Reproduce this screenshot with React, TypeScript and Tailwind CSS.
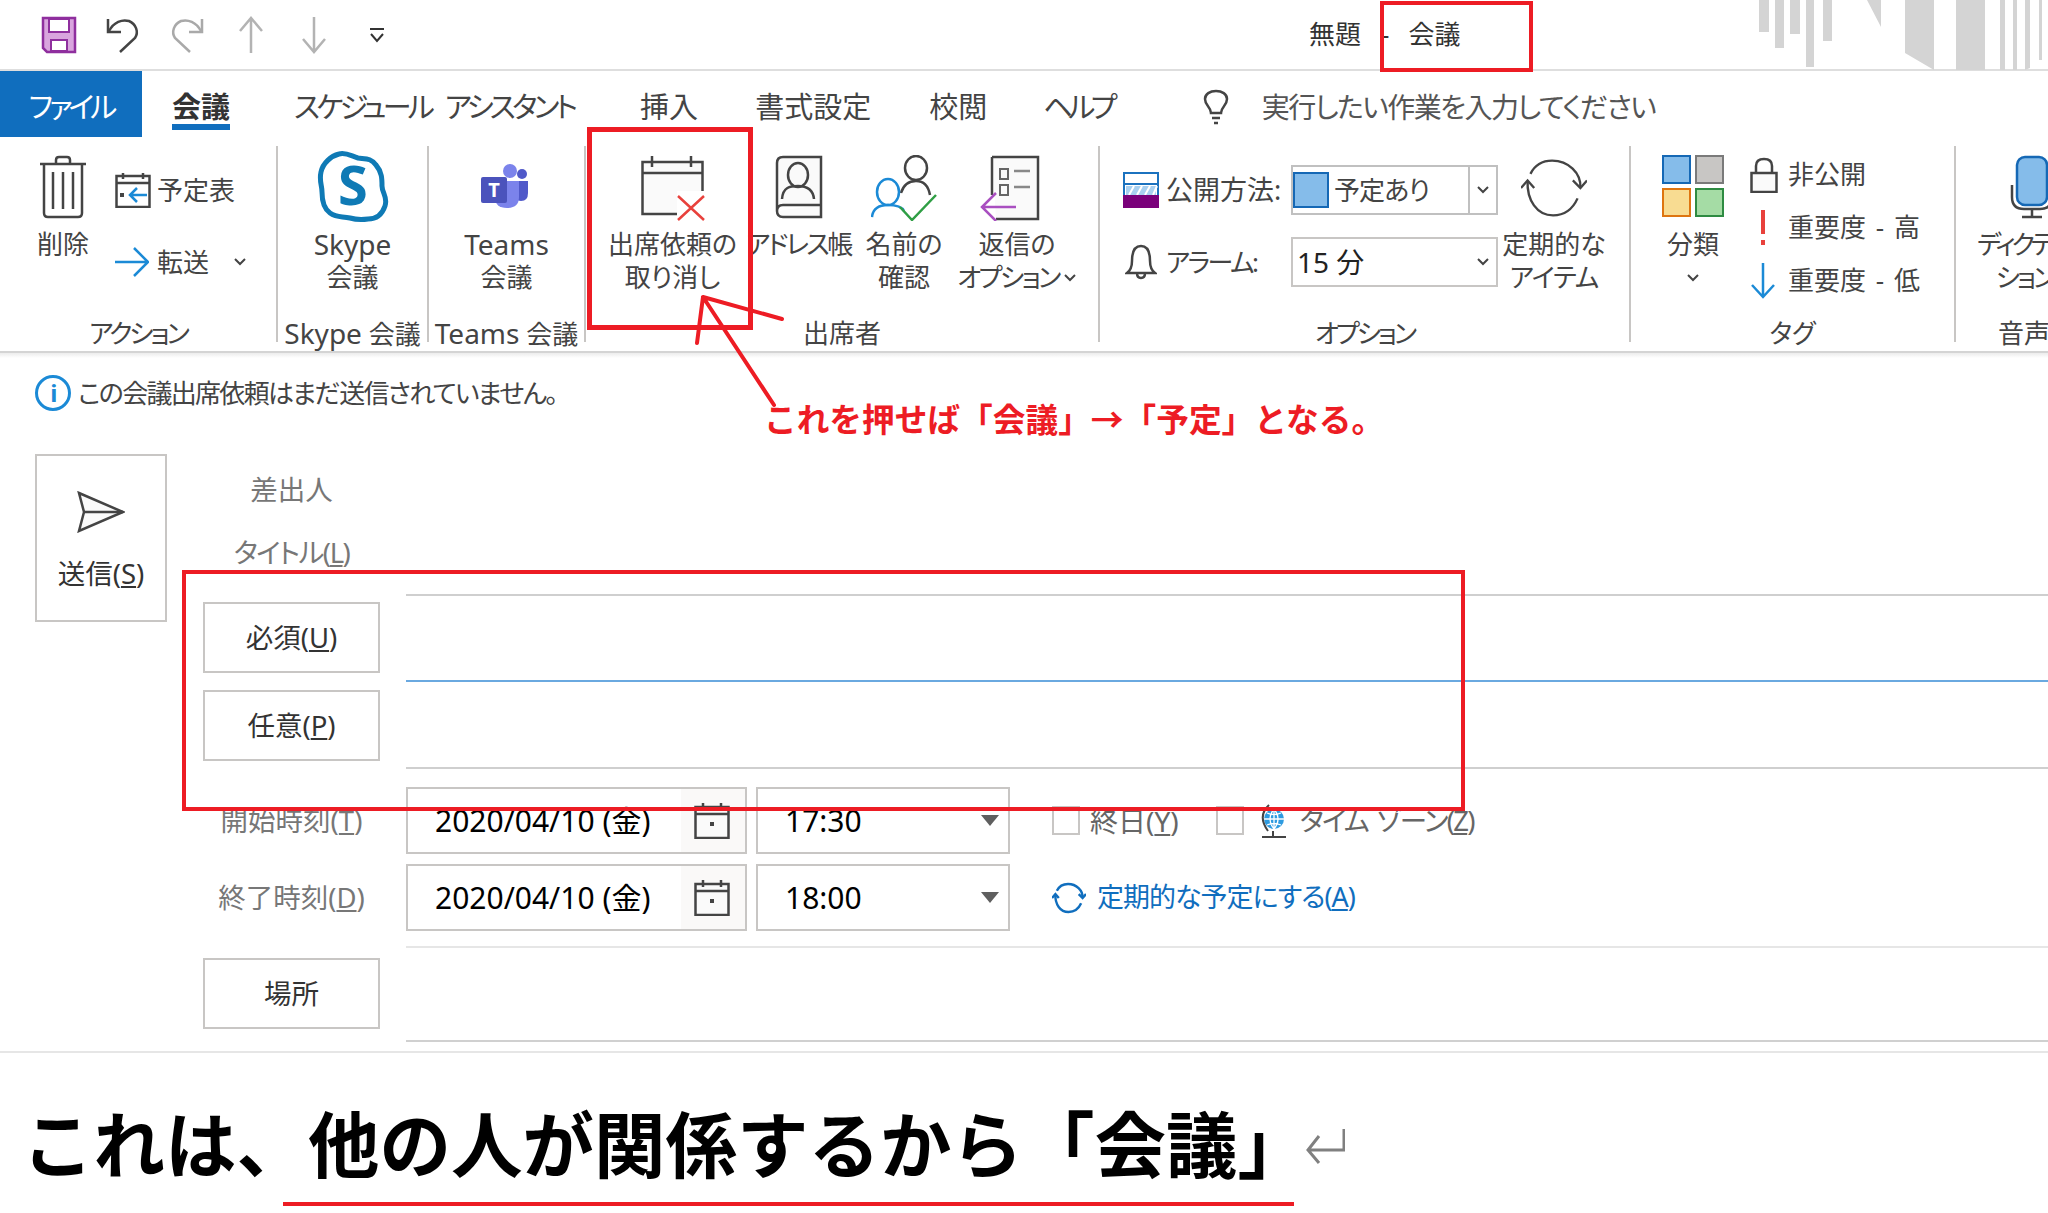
import type { ReactNode } from 'react';
import clsx from 'clsx';

const Chevron = ({ className }: { className?: string }) => (
  <svg width="14" height="10" viewBox="0 0 14 10" className={className} fill="none" stroke="#444" strokeWidth="2">
    <path d="M2 2l5 5 5-5" />
  </svg>
);

const SaveIcon = () => (
  <svg width="36" height="38" viewBox="0 0 36 38">
    <path d="M2 2h32v34H6l-4-4z" fill="#d9a5de" stroke="#8f2f9e" strokeWidth="2.5" />
    <rect x="8" y="3" width="20" height="13" fill="#fff" stroke="#8f2f9e" strokeWidth="2" />
    <rect x="10" y="24" width="16" height="11" fill="#fff" stroke="#8f2f9e" strokeWidth="2" />
  </svg>
);

const UndoIcon = ({ flip, color }: { flip?: boolean; color: string }) => (
  <svg width="34" height="38" viewBox="0 0 34 38" fill="none" stroke={color} strokeWidth="2.5" className={flip ? '-scale-x-100' : ''}>
    <path d="M2 3v13h13" />
    <path d="M3 15C8 6 16 3 23 5c7 3 10 11 6 17L14 36" />
  </svg>
);

const VerticalArrow = ({ down }: { down?: boolean }) => (
  <svg width="26" height="38" viewBox="0 0 26 38" fill="none" stroke="#b3b3b3" strokeWidth="2.5" className={down ? 'rotate-180' : ''}>
    <path d="M13 37V2M2 15L13 2l11 13" />
  </svg>
);

const TrashIcon = () => (
  <svg width="48" height="64" viewBox="0 0 48 64" fill="none" stroke="#444" strokeWidth="2.5">
    <path d="M1 9h46M17 8V5q0-3 3-3h8q3 0 3 3v3" />
    <path d="M5 9v49q0 4 4 4h30q4 0 4-4V9" />
    <path d="M14 17v37M24 17v37M34 17v37" />
  </svg>
);

const CalendarArrowIcon = () => (
  <svg width="36" height="36" viewBox="0 0 36 36" fill="none">
    <path d="M1.500 4h33v31h-33zM1.500 11h33M8 1v6M28 1v6" stroke="#444" strokeWidth="2.500" />
    <path d="M32 23H15M22 16l-7 7 7 7" stroke="#1b8ad6" strokeWidth="2.500" />
    <rect x="5" y="21" width="4" height="4" fill="#444" />
  </svg>
);

const SkypeIcon = () => (
  <svg width="72" height="72" viewBox="0 0 72 72">
    <path
      d="M22 3c7-2 12 2 19 4 8 1 13 0 18 7 6 7 6 14 6 21 0 7 6 11 3 20-3 9-9 13-17 13-7 1-11 1-18-1-8-2-13 0-20-5C6 57 5 49 5 41c0-7-3-11-1-20C6 12 14 5 22 3z"
      fill="#fff"
      stroke="#0f7ab5"
      strokeWidth="5"
    />
    <text x="36" y="54" textAnchor="middle" fontSize="54" fontWeight="700" fill="#0f7ab5" fontFamily="Noto Sans">
      S
    </text>
  </svg>
);

const TeamsIcon = () => (
  <svg width="50" height="46" viewBox="0 0 50 46">
    <circle cx="29" cy="8" r="7" fill="#7b83eb" />
    <circle cx="41" cy="11" r="5" fill="#5059c9" />
    <path d="M33 18h14v12q0 8-7 8-7 0-7-8z" fill="#5059c9" />
    <path d="M14 18h24v16q0 11-12 11-12 0-12-11z" fill="#7b83eb" />
    <rect x="0" y="14" width="26" height="26" rx="2" fill="#4b53bc" />
    <text x="13" y="34" textAnchor="middle" fontSize="20" fontWeight="700" fill="#fff" fontFamily="Noto Sans">
      T
    </text>
  </svg>
);

const CancelIcon = () => (
  <svg width="64" height="66" viewBox="0 0 64 66" fill="none">
    <path d="M1.500 7h60v52h-60zM1.500 18h60" fill="#fafafa" stroke="#444" strokeWidth="2.500" />
    <path d="M11 1v11M50 1v11" stroke="#444" strokeWidth="2.500" />
    <rect x="36" y="36" width="30" height="30" fill="#fff" />
    <path d="M37 41l26 24M63 41L37 65" stroke="#e8413c" strokeWidth="2.500" />
  </svg>
);

const AddressBookIcon = () => (
  <svg width="48" height="64" viewBox="0 0 48 64" fill="none" stroke="#444" strokeWidth="2.500">
    <path d="M46 2H8Q2 2 2 8v48q0 6 6 6h38zM2 56q0-6 6-6h38" fill="#fafafa" />
    <ellipse cx="23" cy="20" rx="10" ry="12" />
    <path d="M7 44c1-12 8-13 16-13s15 3 16 13" />
  </svg>
);

const CheckNamesIcon = () => (
  <svg width="66" height="66" viewBox="0 0 66 66" fill="none" strokeWidth="2.500">
    <ellipse cx="45" cy="13" rx="11" ry="12" stroke="#444" />
    <path d="M30 38c3-10 9-12 15-12s12 3 14 14" stroke="#444" />
    <ellipse cx="17" cy="37" rx="11" ry="13" stroke="#1b8ad6" />
    <path d="M1 62c1-9 7-12 16-12s14 2 16 6" stroke="#1b8ad6" />
    <path d="M29 52l12 13 24-25" stroke="#2f9e44" />
  </svg>
);

const ReplyOptionsIcon = () => (
  <svg width="60" height="66" viewBox="0 0 60 66" fill="none">
    <path d="M12 2h46v62H16" stroke="#444" strokeWidth="2.500" fill="#fafafa" />
    <path d="M12 2v38" stroke="#444" strokeWidth="2.500" />
    <path d="M20 14h8v10h-8zM20 30h8v10h-8z" stroke="#666" strokeWidth="2" />
    <path d="M34 16h16M34 32h16" stroke="#888" strokeWidth="2.500" />
    <path d="M36 52H3M16 38L2 52l14 14" stroke="#a94fc0" strokeWidth="2.500" />
  </svg>
);

const PublishSwatch = () => (
  <svg width="36" height="36" viewBox="0 0 36 36">
    <rect x="1" y="1" width="34" height="34" fill="#fff" stroke="#1b72bf" strokeWidth="2" />
    <path d="M1 12h34" stroke="#1b72bf" strokeWidth="2" />
    <rect x="3" y="14" width="30" height="9" fill="#a8d0f0" />
    <path d="M6 23l5-9M14 23l5-9M22 23l5-9M30 23l4-9" stroke="#fff" strokeWidth="2" />
    <rect x="0" y="23" width="36" height="13" fill="#7a007a" />
  </svg>
);

const BellIcon = () => (
  <svg width="32" height="36" viewBox="0 0 32 36" fill="none" stroke="#444" strokeWidth="2.500">
    <path d="M2 29h28c-4-3-5-6-5-12 0-7-1-15-9-15S7 10 7 17c0 6-1 9-5 12zM12 29q0 5 4 5t4-5" />
  </svg>
);

const RecurIcon = ({ size, color }: { size: number; color: string }) => (
  <svg width={size} height={size} viewBox="0 0 70 62" fill="none" stroke={color} strokeWidth={size > 50 ? 2.5 : 5}>
    <path d="M10 16C15 6 24 2 33 2c17 0 31 13 30 29" />
    <path d="M7 23C6 44 17 60 34 60c12 0 21-7 26-18" />
    <path d="M0 31l7-8 7 8M55 23l8 8 7-8" />
  </svg>
);

const CategoryIcon = () => (
  <svg width="62" height="62" viewBox="0 0 62 62">
    <rect x="1" y="1" width="27" height="27" fill="#85bcea" stroke="#1568b5" strokeWidth="2" />
    <rect x="34" y="1" width="27" height="27" fill="#c8c6c4" stroke="#7a7a7a" strokeWidth="2" />
    <rect x="1" y="34" width="27" height="27" fill="#f8dc92" stroke="#de7510" strokeWidth="2" />
    <rect x="34" y="34" width="27" height="27" fill="#a5dca5" stroke="#2e8b42" strokeWidth="2" />
  </svg>
);

const LockIcon = () => (
  <svg width="28" height="36" viewBox="0 0 28 36" fill="none" stroke="#444" strokeWidth="2.500">
    <rect x="1.500" y="16" width="25" height="19" fill="#fafafa" />
    <path d="M6 16V9q0-7 8-7t8 7v7" />
  </svg>
);

const MicIcon = () => (
  <svg width="44" height="64" viewBox="0 0 44 64" fill="none">
    <rect x="7" y="2" width="30" height="48" rx="8" fill="#85bcea" stroke="#1568b5" strokeWidth="2.500" />
    <path d="M2 30v12q0 12 12 12h16q12 0 12-12V30M22 54v8M12 62h20" stroke="#444" strokeWidth="2.500" />
  </svg>
);

const SendIcon = () => (
  <svg width="48" height="42" viewBox="0 0 48 42" fill="#fafafa" stroke="#444" strokeWidth="2.500">
    <path d="M2 2l44 19L2 40l5-19z" />
    <path d="M7 21h39" />
  </svg>
);

const SmallCalendar = () => (
  <svg width="36" height="36" viewBox="0 0 36 36" fill="#fafafa" stroke="#444" strokeWidth="2.500">
    <path d="M1.500 4h33v31h-33zM1.500 11h33M9 0v7M27 0v7" />
    <rect x="16" y="19" width="4" height="4" fill="#444" stroke="none" />
  </svg>
);

const GlobeIcon = () => (
  <svg width="28" height="34" viewBox="0 0 28 34" fill="none">
    <circle cx="14" cy="15" r="10" fill="#2e9be0" />
    <path d="M4 15h20M14 5v20M7 9q7 3 14 0M7 21q7-3 14 0M14 5q-8 10 0 20M14 5q8 10 0 20" stroke="#fff" strokeWidth="1.300" />
    <path d="M9 1Q-3 12 8 27M2 33h24M13 27v6" stroke="#444" strokeWidth="2" />
  </svg>
);

const RibbonButton = ({ icon, lines, className }: { icon: ReactNode; lines: ReactNode[]; className?: string }) => (
  <div className={clsx('flex flex-col items-center text-[26px] leading-[33px] text-[#444] whitespace-nowrap', className)}>
    <div className="flex h-[82px] items-start justify-center pt-[9px]">{icon}</div>
    {lines.map((line, i) => (
      <div key={i} className="flex h-[33px] items-center">
        {line}
      </div>
    ))}
  </div>
);

const RibbonGroup = ({ label, labelClass, children, className }: { label: ReactNode; labelClass?: string; children: ReactNode; className?: string }) => (
  <section className={clsx('flex h-[196px] shrink-0 flex-col border-r-2 border-[#c8c6c4]', className)}>
    <div className="flex h-[172px] shrink-0">{children}</div>
    <div className={clsx('text-center text-[26px] leading-[30px] text-[#444] whitespace-nowrap', labelClass)}>{label}</div>
  </section>
);

const FieldButton = ({ children, className }: { children: ReactNode; className?: string }) => (
  <div className={clsx('flex h-[71px] w-[177px] items-center justify-center border-2 border-[#c8c6c4] text-[27.5px] text-[#333]', className)}>
    {children}
  </div>
);

const DateRow = ({ date, time, children }: { date: string; time: string; children?: ReactNode }) => (
  <div className="flex h-[67px] items-center text-[30px] text-black">
    <div className="flex h-full w-[341px] items-center border-2 border-[#c8c6c4] pl-[27px]">
      <span className="flex-1">{date}</span>
      <div className="flex h-full w-[64px] items-center justify-center bg-[#faf9f8] pr-[2px]">
        <SmallCalendar />
      </div>
    </div>
    <div className="ml-[9px] flex h-full w-[254px] items-center justify-between border-2 border-[#c8c6c4] pl-[27px] pr-[9px]">
      <span>{time}</span>
      <span className="h-0 w-0 border-x-[9px] border-t-[11px] border-x-transparent border-t-[#5f5f5f]" />
    </div>
    {children}
  </div>
);

const SideLabel = ({ children, className }: { children: ReactNode; className?: string }) => (
  <div className={clsx('w-[177px] shrink-0 text-center text-[27.5px] leading-[52px] text-[#777] whitespace-nowrap', className)}>{children}</div>
);

export default function App() {
  return (
    <div className="relative h-[1213px] w-full overflow-hidden bg-white font-['Noto_Sans','Noto_Sans_CJK_JP',sans-serif] [font-feature-settings:'palt']">
      <header className="relative flex h-[71px] items-center border-b-2 border-[#dedede] pl-[41px]">
        <div className="flex items-center">
          <SaveIcon />
          <div className="ml-[29px]">
            <UndoIcon color="#444" />
          </div>
          <div className="ml-[30px]">
            <UndoIcon flip color="#a9a9a9" />
          </div>
          <div className="ml-[34px]">
            <VerticalArrow />
          </div>
          <div className="ml-[37px]">
            <VerticalArrow down />
          </div>
          <svg width="16" height="16" viewBox="0 0 16 16" fill="none" stroke="#333" strokeWidth="2" className="ml-[42px]">
            <path d="M1 2h14M2 7l6 7 6-7" />
          </svg>
        </div>
        <div className="ml-[924px] flex w-[260px] text-[26px] text-[#333]">
          <span>無題</span>
          <span className="ml-[20px] mr-[19px]">-</span>
          <span>会議</span>
        </div>
        <svg width="300" height="70" viewBox="1748 0 300 70" fill="#d4d4d4" className="absolute right-0 top-0">
          <path d="M1759 0h10v32h-10zM1775 0h9v48h-9zM1790 0h10v34h-10zM1806 0h8v67h-8zM1823 0h9v41h-9zM1867 0h14v27zM1905 0h29v70l-29-17zM1956 0h29v70h-29zM2000 0h5v70h-5zM2013 0h4v70h-4zM2025 0h5v68l-5 2zM2039 0h3v60h-3z" />
        </svg>
      </header>

      <nav className="flex h-[66px] text-[29px] text-[#444]">
        <div className="flex w-[142px] items-center justify-center bg-[#106ebe] pt-[5px] tracking-[-4px] text-white">ファイル</div>
        <div className="flex items-center pt-[5px]">
          <div className="relative ml-[30px] font-bold text-[#333]">
            会議
            <span className="absolute left-0 top-[39px] h-[6px] w-full bg-[#106ebe]" />
          </div>
          <div className="ml-[64px] tracking-[-3.8px] [word-spacing:10px]">スケジュール アシスタント</div>
          <div className="ml-[66px]">挿入</div>
          <div className="ml-[57px]">書式設定</div>
          <div className="ml-[58px]">校閲</div>
          <div className="ml-[56px] tracking-[-4.5px]">ヘルプ</div>
          <svg width="26" height="36" viewBox="0 0 26 36" fill="none" stroke="#444" strokeWidth="2.500" className="ml-[90px]">
            <path d="M8 24c0-6-6-7-6-14C2 5 7 2 13 2s11 3 11 8c0 7-6 8-6 14zM9 29h8M11 34h4" />
          </svg>
          <div className="ml-[33px] text-[28px] tracking-[-1.5px] text-[#555]">実行したい作業を入力してください</div>
        </div>
      </nav>

      <div className="flex h-[216px] border-b-2 border-[#d4d4d4] pt-[9px]">
        <RibbonGroup label="アクション" labelClass="tracking-[-3px]" className="w-[278px]">
          <RibbonButton className="ml-[11px] w-[104px]" icon={<TrashIcon />} lines={['削除']} />
          <div className="flex flex-col gap-[22px] pt-[19px] text-[26px] text-[#444]">
            <div className="flex h-[50px] items-center gap-[6px]">
              <CalendarArrowIcon />
              予定表
            </div>
            <div className="flex h-[50px] items-center gap-[8px]">
              <svg width="34" height="32" viewBox="0 0 34 32" fill="none" stroke="#1b8ad6" strokeWidth="2.500">
                <path d="M0 16h32M19 2l14 14-14 14" />
              </svg>
              転送
              <Chevron className="ml-[16px]" />
            </div>
          </div>
        </RibbonGroup>

        <RibbonGroup label={<><span className="text-[28px]">Skype</span> 会議</>} className="w-[151px] items-center">
          <RibbonButton
            className="w-full"
            icon={<div className="-mt-[4px]"><SkypeIcon /></div>}
            lines={[<span className="text-[28px]">Skype</span>, '会議']}
          />
        </RibbonGroup>

        <RibbonGroup label={<><span className="text-[28px]">Teams</span> 会議</>} className="w-[157px] items-center">
          <RibbonButton
            className="w-full"
            icon={<div className="pt-[8px]"><TeamsIcon /></div>}
            lines={[<span className="text-[28px]">Teams</span>, '会議']}
          />
        </RibbonGroup>

        <RibbonGroup label="出席者" className="w-[514px]">
          <RibbonButton className="w-[173px]" icon={<CancelIcon />} lines={['出席依頼の', '取り消し']} />
          <RibbonButton className="w-[79px]" icon={<AddressBookIcon />} lines={[<span className="tracking-[-2.5px]">アドレス帳</span>]} />
          <RibbonButton className="w-[132px]" icon={<CheckNamesIcon />} lines={['名前の', '確認']} />
          <RibbonButton
            className="w-[94px]"
            icon={<div className="pr-[14px]"><ReplyOptionsIcon /></div>}
            lines={['返信の', <><span className="tracking-[-2.5px]">オプション</span><Chevron className="ml-[4px]" /></>]}
          />
        </RibbonGroup>

        <RibbonGroup label="オプション" labelClass="tracking-[-3px]" className="w-[531px]">
          <div className="flex flex-col gap-[22px] pl-[23px] pt-[19px] text-[26px] text-[#444]">
            <div className="flex h-[50px] items-center">
              <div className="flex w-[168px] items-center gap-[7px] text-[27px]">
                <PublishSwatch />
                公開方法:
              </div>
              <div className="flex h-full w-[207px] items-center border-2 border-[#c0c0c0]">
                <span className="h-[36px] w-[36px] border-2 border-[#1568b5] bg-[#85bcea]" />
                <span className="ml-[5px] flex-1 tracking-[-1px]">予定あり</span>
                <span className="flex h-full w-[28px] items-center justify-center border-l-2 border-[#c0c0c0]">
                  <Chevron />
                </span>
              </div>
            </div>
            <div className="flex h-[50px] items-center">
              <div className="flex w-[168px] items-center gap-[9px] pl-[2px] tracking-[-2.5px]">
                <BellIcon />
                アラーム:
              </div>
              <div className="flex h-full w-[207px] items-center justify-between border-2 border-[#c8c6c4] pl-[4px] pr-[6px] text-[28px] text-[#222]">
                15 分
                <Chevron />
              </div>
            </div>
          </div>
          <RibbonButton
            className="w-[112px]"
            icon={<RecurIcon size={66} color="#444" />}
            lines={['定期的な', <span className="tracking-[-1px]">アイテム</span>]}
          />
        </RibbonGroup>

        <RibbonGroup label="タグ" className="w-[325px]">
          <RibbonButton className="ml-[5px] w-[114px]" icon={<CategoryIcon />} lines={['分類', <Chevron />]} />
          <div className="flex flex-col pt-[2px] text-[26px] text-[#444] whitespace-nowrap">
            <div className="flex h-[53px] items-center">
              <div className="w-[38px]">
                <LockIcon />
              </div>
              非公開
            </div>
            <div className="flex h-[53px] items-center [word-spacing:3px]">
              <div className="w-[38px] pl-[11px]">
                <span className="block h-[24px] w-[4px] bg-[#e8413c]" />
                <span className="mt-[6px] block h-[5px] w-[4px] bg-[#e8413c]" />
              </div>
              重要度 - 高
            </div>
            <div className="flex h-[53px] items-center [word-spacing:3px]">
              <div className="w-[38px]">
                <svg width="26" height="36" viewBox="0 0 26 36" fill="none" stroke="#1b8ad6" strokeWidth="2.500">
                  <path d="M13 0v34M2 22l11 12 11-12" />
                </svg>
              </div>
              重要度 - 低
            </div>
          </div>
        </RibbonGroup>

        <section className="flex h-[196px] w-[92px] shrink-0 flex-col">
          <div className="flex h-[172px] shrink-0 pl-[21px]">
            <RibbonButton
              icon={<div className="pl-[14px]"><MicIcon /></div>}
              lines={[<span className="tracking-[-4px]">ディクテー</span>, <span className="tracking-[-3px]">ション</span>]}
            />
          </div>
          <div className="pl-[42px] text-[26px] leading-[30px] text-[#444] whitespace-nowrap">音声</div>
        </section>
      </div>
      <div className="h-[5px] bg-gradient-to-b from-[#ececec] to-white" />

      <div className="flex h-[70px] items-center gap-[7px] pl-[35px] text-[26px] tracking-[-1.7px] text-[#444]">
        <span className="flex h-[36px] w-[36px] items-center justify-center rounded-full border-[3px] border-[#1b8ad6] text-[24px] font-bold text-[#1b8ad6]">
          i
        </span>
        この会議出席依頼はまだ送信されていません。
      </div>

      <div className="mt-[26px] flex">
        <div className="ml-[35px] flex h-[168px] w-[132px] shrink-0 flex-col items-center border-2 border-[#c8c6c4] pt-[35px] text-[27.5px] text-[#333]">
          <SendIcon />
          <span className="mt-[20px]">
            送信(<span className="underline">S</span>)
          </span>
        </div>

        <div className="ml-[36px] flex-1">
          <div className="flex gap-[26px] pt-[10px]">
            <SideLabel>差出人</SideLabel>
          </div>
          <div className="flex gap-[26px] pt-[11px]">
            <SideLabel className="tracking-[-1.5px]">
              タイトル(<span className="underline">L</span>)
            </SideLabel>
          </div>
          <div className="mt-[15px] flex h-[88px] gap-[26px]">
            <div className="pt-[8px]">
              <FieldButton>
                必須(<span className="underline">U</span>)
              </FieldButton>
            </div>
            <div className="flex-1 border-y-2 border-t-[#cfcfcf] border-b-[#6aa9e0]" />
          </div>
          <div className="flex h-[87px] gap-[26px]">
            <div className="pt-[8px]">
              <FieldButton>
                任意(<span className="underline">P</span>)
              </FieldButton>
            </div>
            <div className="flex-1 border-b-2 border-[#cfcfcf]" />
          </div>
          <div className="mt-[18px] flex items-center gap-[26px]">
            <SideLabel>
              開始時刻(<span className="underline">T</span>)
            </SideLabel>
            <DateRow date="2020/04/10 (金)" time="17:30">
              <span className="ml-[42px] h-[29px] w-[28px] border-2 border-[#c8c6c4]" />
              <span className="ml-[10px] text-[28px] text-[#666]">
                終日(<span className="underline">Y</span>)
              </span>
              <span className="ml-[37px] h-[29px] w-[28px] border-2 border-[#c8c6c4]" />
              <span className="ml-[16px]">
                <GlobeIcon />
              </span>
              <span className="ml-[12px] text-[27.5px] tracking-[-1.7px] text-[#666] whitespace-nowrap [word-spacing:3px]">
                タイム ゾーン(<span className="underline">Z</span>)
              </span>
            </DateRow>
          </div>
          <div className="mt-[10px] flex items-center gap-[26px]">
            <SideLabel>
              終了時刻(<span className="underline">D</span>)
            </SideLabel>
            <DateRow date="2020/04/10 (金)" time="18:00">
              <span className="ml-[42px]">
                <RecurIcon size={34} color="#106ebe" />
              </span>
              <span className="ml-[11px] text-[27px] tracking-[-1px] text-[#106ebe] whitespace-nowrap">
                定期的な予定にする(<span className="underline">A</span>)
              </span>
            </DateRow>
          </div>
          <div className="mt-[15px] flex h-[96px] gap-[26px]">
            <div className="pt-[12px]">
              <FieldButton>場所</FieldButton>
            </div>
            <div className="flex-1 border-y-2 border-t-[#e6e6e6] border-b-[#d0d0d0]" />
          </div>
        </div>
      </div>

      <div className="mt-[9px] flex items-center border-t-2 border-[#e6e6e6] pl-[22px] pt-[57px] [font-feature-settings:normal]">
        <h1 className="text-[71.5px] font-bold leading-[70px] text-black whitespace-nowrap">これは、他の人が関係するから「会議」</h1>
        <svg width="40" height="36" viewBox="0 0 40 36" fill="none" stroke="#808080" strokeWidth="3" className="-ml-[4px] mt-[2px]">
          <path d="M39 1v21H3M14 8L3 22l11 13" />
        </svg>
      </div>

      <div className="absolute left-[1380px] top-[1px] h-[71px] w-[153px] border-4 border-[#ed1c24]" />
      <div className="absolute left-[587px] top-[127px] h-[203px] w-[166px] border-[5px] border-[#ed1c24]" />
      <svg width="110" height="130" viewBox="0 0 110 130" fill="none" stroke="#ed1c24" strokeWidth="4" strokeLinecap="round" className="absolute left-[685px] top-[285px]">
        <path d="M18 12l79 22M18 12l-6 46M18 12l71 108" />
      </svg>
      <div className="absolute left-[764px] top-[396px] text-[32.7px] font-bold leading-[48px] text-[#ed1c24] whitespace-nowrap [font-feature-settings:normal]">
        これを押せば「会議」→「予定」となる。
      </div>
      <div className="absolute left-[182px] top-[570px] h-[241px] w-[1283px] border-4 border-[#ed1c24]" />
      <div className="absolute left-[283px] top-[1202px] h-[4px] w-[1011px] bg-[#ed1c24]" />
    </div>
  );
}
